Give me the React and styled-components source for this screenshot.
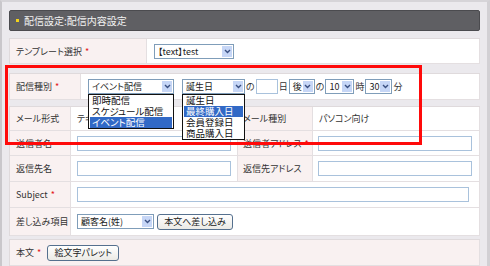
import React from "react";
import styled, { createGlobalStyle } from "styled-components";

const Global = createGlobalStyle`
  html, body { margin: 0; padding: 0; }
  body {
    font-family: "Noto Sans CJK JP", "Noto Sans", sans-serif;
    font-feature-settings: "palt";
    color: #333;
  }
`;

const Frame = styled.div`
  position: relative;
  box-sizing: border-box;
  width: 490px;
  height: 266px;
  overflow: hidden;
  background: #ebe9ed;
  border-top: 2px solid #d6d4d8;
  border-left: 2px solid #c9c7cb;
  border-right: 3px solid #d2d0d4;
  padding: 8px 7px 0 7px;
`;

const Header = styled.div`
  height: 21px;
  box-sizing: border-box;
  background: #5f5f63;
  border: 1px solid #4b4b4f;
  border-radius: 2px;
  display: flex;
  align-items: center;
  padding-left: 6px;
  gap: 5px;
  color: #f2f2f2;
  font-size: 10px;
`;

const Bullet = styled.span`
  width: 3px;
  height: 3px;
  background: #f2d21a;
`;

const Table = styled.div`
  margin-top: ${(p) => p.$top}px;
  display: grid;
  grid-template-columns: ${(p) => p.$cols};
  grid-auto-rows: ${(p) => p.$rows || "auto"};
  background: #fff;
  border: 1px solid #dfdadc;
  border-right: 0;
  border-bottom: 0;
`;

const Cell = styled.div`
  display: flex;
  align-items: center;
  gap: ${(p) => p.$gap || 0}px;
  box-sizing: border-box;
  padding-left: ${(p) => p.$pad ?? 6}px;
  background: ${(p) => (p.$label ? "#f9f1f1" : "#fff")};
  border-right: 1px solid #e4dfe1;
  border-bottom: 1px solid #e4dfe1;
  grid-column: ${(p) => p.$span || "auto"};
  font-size: 9px;
  color: #333;
  white-space: nowrap;
`;

const Req = styled.span`
  color: #e4161a;
  font-size: 9px;
  margin-left: 3px;
`;

const SelectBox = styled.div`
  position: relative;
  box-sizing: border-box;
  width: ${(p) => p.$w}px;
  height: 15px;
  border: 1px solid #7f9db9;
  background: #fff;
  display: flex;
  align-items: center;
  justify-content: space-between;
  padding-left: 3px;
  font-size: 9px;
  color: #222;
`;

const ArrowBox = styled.span`
  width: 10px;
  height: 11px;
  margin-right: 1px;
  background: #c6d6f6;
  display: flex;
  align-items: center;
  justify-content: center;
`;

const DropList = styled.div`
  position: absolute;
  left: -1px;
  top: 14px;
  z-index: 3;
  box-sizing: border-box;
  width: ${(p) => p.$w}px;
  background: #fff;
  border: 1px solid #111;
  padding: 0 1px;
`;

const DropItem = styled.div`
  height: 11px;
  line-height: 11px;
  font-size: 9.5px;
  padding-left: 2px;
  color: ${(p) => (p.$active ? "#fff" : "#111")};
  background: ${(p) => (p.$active ? "#3169c6" : "transparent")};
`;

const TextInput = styled.div`
  box-sizing: border-box;
  width: ${(p) => p.$w}px;
  height: 15px;
  border: 1px solid #a9c2dc;
  background: #fff;
`;

const Button = styled.div`
  box-sizing: border-box;
  width: ${(p) => p.$w}px;
  height: 16px;
  border: 1px solid #55708e;
  border-radius: 3px;
  background: linear-gradient(#ffffff, #ebeae5);
  display: flex;
  align-items: center;
  justify-content: center;
  font-size: 9px;
  color: #222;
  margin-left: ${(p) => p.$ml || 0}px;
`;

const Word = styled.span`
  font-size: 9px;
  color: #333;
  margin: 0 ${(p) => p.$m ?? 1}px;
`;

const Spacer = styled.span`
  width: ${(p) => p.$w}px;
`;

const Annotation = styled.div`
  position: absolute;
  left: 3px;
  top: 63px;
  width: 417px;
  height: 80px;
  box-sizing: border-box;
  border: 3px solid #ff0a0a;
  z-index: 5;
  pointer-events: none;
`;

const Filler = styled.div`
  margin-top: 1px;
  height: 10px;
  background: #fff;
  border: 1px solid #dfdadc;
`;

const Chevron = () => (
  <svg width="7" height="5" viewBox="0 0 7 5">
    <path d="M1 1 L3.5 3.5 L6 1" stroke="#3a4f80" strokeWidth="1.4" fill="none" />
  </svg>
);

const Select = ({ w, value, options, active }) => (
  <SelectBox $w={w}>
    <span>{value}</span>
    <ArrowBox>
      <Chevron />
    </ArrowBox>
    {options && (
      <DropList $w={w}>
        {options.map((o) => (
          <DropItem key={o} $active={o === active}>
            {o}
          </DropItem>
        ))}
      </DropList>
    )}
  </SelectBox>
);

const Label = ({ children, req, after, ...rest }) => (
  <Cell $label {...rest}>
    {children}
    {req && <Req>*</Req>}
    {after}
  </Cell>
);

export default function App() {
  return (
    <>
      <Global />
      <Frame>
        <Header>
          <Bullet />
          配信設定:配信内容設定
        </Header>

        <Table $top={7} $cols="137px 1fr" $rows="25px">
          <Label req>テンプレート選択</Label>
          <Cell $pad={7}>
            <Select w={80} value="【text】test" />
          </Cell>
        </Table>

        <Table $top={9} $cols="71px 1fr" $rows="26px">
          <Label req>配信種別</Label>
          <Cell $pad={7}>
            <Select
              w={86}
              value="イベント配信"
              options={["即時配信", "スケジュール配信", "イベント配信"]}
              active="イベント配信"
            />
            <Spacer $w={8} />
            <Select
              w={63}
              value="誕生日"
              options={["誕生日", "最終購入日", "会員登録日", "商品購入日"]}
              active="最終購入日"
            />
            <Word>の</Word>
            <TextInput $w={22} />
            <Word>日</Word>
            <Select w={26} value="後" />
            <Word>の</Word>
            <Select w={29} value="10" />
            <Word>時</Word>
            <Select w={27} value="30" />
            <Word>分</Word>
          </Cell>
        </Table>

        <Table $top={6} $cols="61px 167px 75px 1fr">
          <Label style={{ height: 24 }}>メール形式</Label>
          <Cell>テキスト</Cell>
          <Label $pad={5}>メール種別</Label>
          <Cell>パソコン向け</Cell>

          <Label style={{ height: 25 }}>送信者名</Label>
          <Cell>
            <TextInput $w={154} />
          </Cell>
          <Label $pad={5} req>
            送信者アドレス
          </Label>
          <Cell $pad={5}>
            <TextInput $w={154} />
          </Cell>

          <Label style={{ height: 26 }}>返信先名</Label>
          <Cell>
            <TextInput $w={154} />
          </Cell>
          <Label $pad={5}>返信先アドレス</Label>
          <Cell $pad={5}>
            <TextInput $w={154} />
          </Cell>

          <Label req style={{ height: 26 }}>
            Subject
          </Label>
          <Cell $span="2 / 5">
            <TextInput $w={392} />
          </Cell>

          <Label style={{ height: 28 }}>差し込み項目</Label>
          <Cell $span="2 / 5">
            <Select w={77} value="顧客名(姓)" />
            <Button $w={76} $ml={3}>
              本文へ差し込み
            </Button>
          </Cell>
        </Table>

        <Table $top={3} $cols="1fr" $rows="26px">
          <Label
            req
            after={
              <Button $w={72} $ml={6}>
                絵文字パレット
              </Button>
            }
          >
            本文
          </Label>
        </Table>
        <Filler />

        <Annotation />
      </Frame>
    </>
  );
}
